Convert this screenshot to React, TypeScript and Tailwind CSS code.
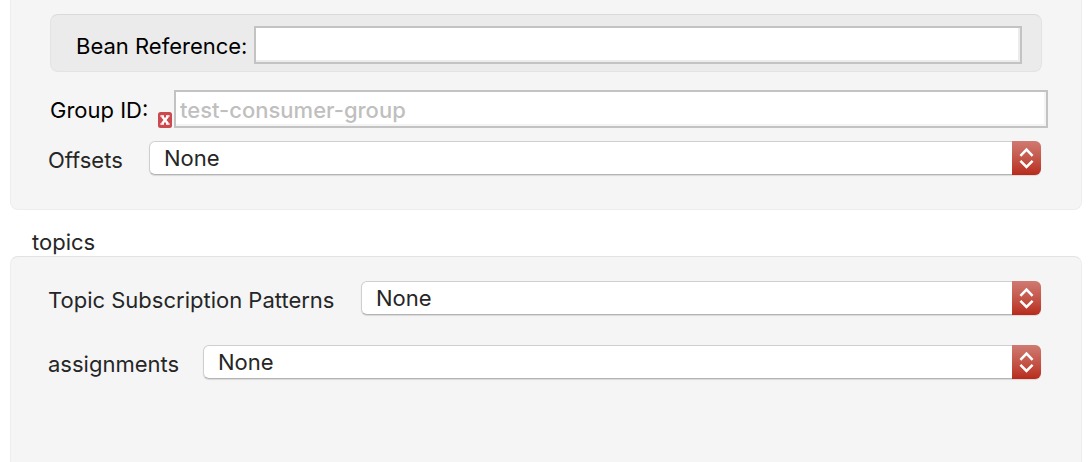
import { useId } from "react";

function ChevronPair() {
  return (
    <svg viewBox="0 0 29 34" className="h-full w-[29px]" fill="none" stroke="white" strokeWidth="2.5" aria-hidden="true">
      <path d="M8.4 14.8 14.5 8.6 20.6 14.8" />
      <path d="M8.4 19.8 14.5 26 20.6 19.8" />
    </svg>
  );
}

function ErrorBadge() {
  return (
    <svg viewBox="0 0 14 16" className="h-4 w-[14px]" role="img" aria-label="Error">
      <rect width="14" height="16" rx="2.5" fill="#cb4a50" />
      <path d="M4.2 4.4 9.8 11.6M9.8 4.4 4.2 11.6" stroke="white" strokeWidth="2.4" />
      <path d="M2.4 4h3.6M8 4h3.6M2.4 12h3.6M8 12h3.6" stroke="white" strokeWidth="1.6" />
    </svg>
  );
}

function SelectRow({ label, labelClass }: { label: string; labelClass: string }) {
  const id = useId();
  return (
    <div className="flex h-[34px] items-center pr-10 pl-[37px]">
      <label htmlFor={id} className={`shrink-0 pt-1 text-[#262626] ${labelClass}`}>
        {label}
      </label>
      <div className="relative h-full min-w-0 flex-1">
        <select
          id={id}
          className="block h-full w-full appearance-none rounded-md border border-[#cfcfcf] border-b-[#b4b4b4] bg-white pr-10 pl-[14px] text-[#262626] shadow-[0_1px_1px_rgba(0,0,0,0.12)] outline-none"
        >
          <option>None</option>
        </select>
        <span className="pointer-events-none absolute inset-y-0 right-0 overflow-hidden rounded-r-md bg-linear-to-b from-[#cf7a72] to-[#b72a1b]">
          <ChevronPair />
        </span>
      </div>
    </div>
  );
}

export default function App() {
  return (
    <main className="flex min-h-screen flex-col bg-white pr-[6px] pl-[10px] font-['Inter','Liberation_Sans',sans-serif] text-[22px] leading-7 text-black">
      <section className="rounded-b-lg border border-t-0 border-[#ededed] bg-[#f5f5f5] pt-[14px] pb-[34px]">
        <div className="mx-[39px] flex h-[58px] items-center rounded-lg border border-[#e3e3e3] border-t-[#dadada] bg-[#ebebeb] pt-1 pr-[19px] pl-[25px]">
          <label htmlFor="bean" className="w-[178px] shrink-0 pt-[2px]">
            Bean Reference:
          </label>
          <input
            id="bean"
            type="text"
            className="h-[38px] min-w-0 flex-1 border-2 border-[#c3c3c3] bg-white px-1 shadow-[inset_-2px_-2px_0_#ececec] outline-none"
          />
        </div>
        <div className="mt-[18px] flex h-[38px] items-center pr-[33px] pl-[39px]">
          <label htmlFor="group" className="w-[108px] shrink-0 pt-[2px]">
            Group ID:
          </label>
          <span className="mr-[2px] shrink-0 self-end">
            <ErrorBadge />
          </span>
          <input
            id="group"
            type="text"
            placeholder="test-consumer-group"
            className="h-full min-w-0 flex-1 border-2 border-[#c3c3c3] bg-white px-1 pt-[2px] font-medium shadow-[inset_-2px_-2px_0_#f4f4f4] outline-none placeholder:text-[#bfbfbf]"
          />
        </div>
        <div className="mt-[13px]">
          <SelectRow label="Offsets" labelClass="w-[101px]" />
        </div>
      </section>
      <h2 className="mt-[18px] pl-[22px] text-[#262626]">topics</h2>
      <section className="flex flex-1 flex-col gap-[30px] rounded-t-lg border border-b-0 border-[#ededed] border-t-[#e2e2e2] bg-[#f5f5f5] pt-6">
        <SelectRow label="Topic Subscription Patterns" labelClass="w-[313px]" />
        <SelectRow label="assignments" labelClass="w-[155px]" />
      </section>
    </main>
  );
}
